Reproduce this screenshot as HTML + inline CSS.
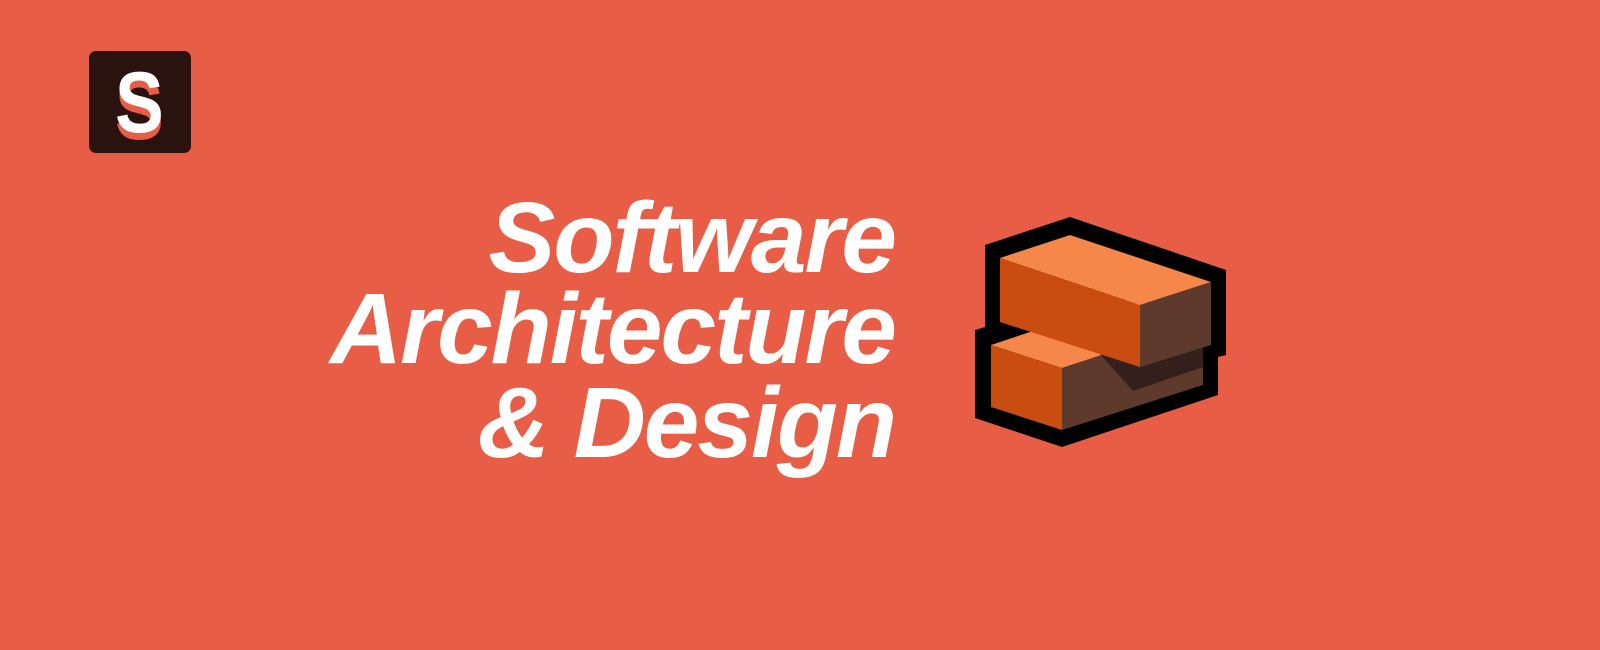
<!DOCTYPE html>
<html><head><style>
html,body{margin:0;padding:0}
body{width:1600px;height:650px;background:#e85d45;position:relative;overflow:hidden}
.logo{position:absolute;left:89px;top:51px;width:102px;height:102px;background:#2a120e;border-radius:7px}
.t{position:absolute;right:705px;font-family:"Liberation Sans",sans-serif;font-weight:bold;font-style:italic;color:#fff;font-size:100px;letter-spacing:-2px;line-height:1;white-space:nowrap}
</style></head><body>
<div class="logo">
<svg width="102" height="102" viewBox="0 0 102 102">
<g transform="translate(26,0) scale(0.85,1)">
<text x="0" y="88" font-family="Liberation Sans" font-weight="bold" font-size="86" fill="#e85d45">S</text>
<text x="0" y="81" font-family="Liberation Sans" font-weight="bold" font-size="86" fill="#fff">S</text>
</g>
</svg>
</div>
<div class="t" style="top:188px">Software</div>
<div class="t" style="top:279px">Architecture</div>
<div class="t" style="top:373px">&amp; Design</div>
<svg style="position:absolute;left:0;top:0" width="1600" height="650">
<polygon points="985,245 1070,217 1226,270 1226,355 1218,357 1218,395 1062,447 975,418 975,330 985,327" fill="#000"/>
<polygon points="991,345 1132,298 1203,322 1062,368" fill="#f5874a"/>
<polygon points="991,345 1062,368 1062,430 991,407" fill="#c94d10"/>
<polygon points="1062,368 1203,322 1203,385 1062,430" fill="#5e3a2c"/>
<polygon points="1100,354 1140,367 1203,346 1203,367 1133,391" fill="#33201a"/>
<polygon points="1000,258 1070,235 1211,282 1140,305" fill="#f5874a"/>
<polygon points="1000,258 1140,305 1140,367 1000,322" fill="#c94d10"/>
<polygon points="1140,305 1211,282 1211,345 1140,367" fill="#5e3a2c"/>
</svg>
</body></html>
